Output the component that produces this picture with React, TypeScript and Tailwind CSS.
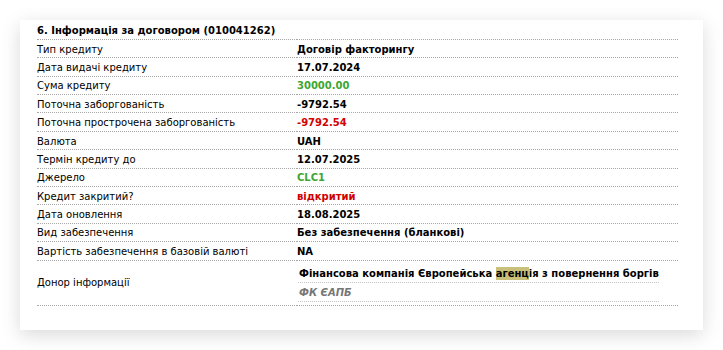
import React from 'react';

type Row = { label: string; value: string; tone?: 'green' | 'red' };

const rows: Row[] = [
  { label: 'Тип кредиту', value: 'Договір факторингу' },
  { label: 'Дата видачі кредиту', value: '17.07.2024' },
  { label: 'Сума кредиту', value: '30000.00', tone: 'green' },
  { label: 'Поточна заборгованість', value: '-9792.54' },
  { label: 'Поточна прострочена заборгованість', value: '-9792.54', tone: 'red' },
  { label: 'Валюта', value: 'UAH' },
  { label: 'Термін кредиту до', value: '12.07.2025' },
  { label: 'Джерело', value: 'CLC1', tone: 'green' },
  { label: 'Кредит закритий?', value: 'відкритий', tone: 'red' },
  { label: 'Дата оновлення', value: '18.08.2025' },
  { label: 'Вид забезпечення', value: 'Без забезпечення (бланкові)' },
  { label: 'Вартість забезпечення в базовій валюті', value: 'NA' },
];

const toneClass = {
  green: 'text-[#3ea631]',
  red: 'text-[#d00000]',
};

export default function App() {
  return (
    <div className="min-h-[350px] bg-white pt-[20px] font-['DejaVu_Sans',Verdana,sans-serif] text-[10px] text-black">
      <div className="ml-[20px] h-[310px] w-[683px] bg-white pl-[17px] pr-[25px] pt-px shadow-[0_5px_18px_rgba(0,0,0,0.15)]">
        <table className="w-full border-collapse">
          <tbody>
            <tr>
              <td colSpan={2} className="h-[18.4px] border-b border-dotted border-[#a8a8a8] p-0 pt-[2px] align-middle font-bold leading-none">
                6. Інформація за договором (010041262)
              </td>
            </tr>
            {rows.map((r) => (
              <tr key={r.label}>
                <td className="h-[18.4px] w-[260px] border-b border-dotted border-[#a8a8a8] p-0 pt-[2px] align-middle leading-none">
                  {r.label}
                </td>
                <td className={`h-[18.4px] border-b border-dotted border-[#a8a8a8] p-0 pt-[2px] align-middle font-bold leading-none ${r.tone ? toneClass[r.tone] : ''}`}>
                  {r.value}
                </td>
              </tr>
            ))}
            <tr>
              <td className="h-[45px] border-b border-dotted border-[#a8a8a8] p-0 align-middle leading-none">
                Донор інформації
              </td>
              <td className="border-b border-dotted border-[#a8a8a8] p-0 align-middle">
                <table className="my-[3.5px] ml-px w-[358px] border-collapse">
                  <tbody>
                    <tr>
                      <td className="h-[18.5px] whitespace-nowrap border-b border-dotted border-[#c4c4c4] p-0 pl-px pt-[2px] align-middle font-bold leading-none">
                        Фінансова компанія Європейська <span className="bg-[#c9c07a] py-px">агенц</span>ія з повернення боргів
                      </td>
                    </tr>
                    <tr>
                      <td className="h-[18.5px] border-b border-dotted border-[#c4c4c4] p-0 pl-px pt-[2px] align-middle font-bold italic leading-none text-[#777777]">
                        ФК ЄАПБ
                      </td>
                    </tr>
                  </tbody>
                </table>
              </td>
            </tr>
          </tbody>
        </table>
      </div>
    </div>
  );
}
